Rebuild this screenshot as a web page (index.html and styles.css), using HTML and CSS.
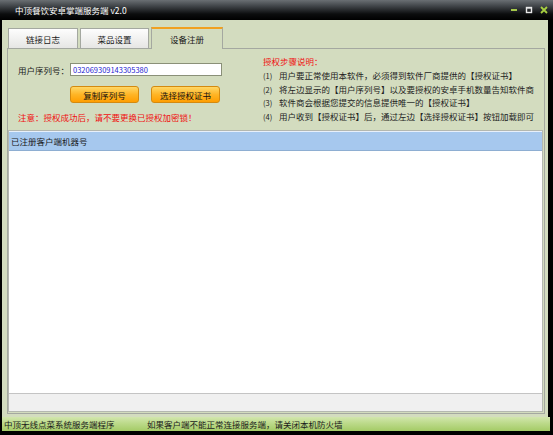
FILE: index.html
```html
<!DOCTYPE html>
<html>
<head>
<meta charset="utf-8">
<link rel="stylesheet" href="styles.css">
</head>
<body>
<div class="window">
  <div class="titlebar">
    <span class="title">中顶餐饮安卓掌端服务端 v2.0</span>
    <div class="controls">
      <svg class="ctl" width="8" height="8" viewBox="0 0 8 8"><rect x="1" y="3" width="6" height="2" fill="#a6c84a"/></svg>
      <svg class="ctl" width="8" height="8" viewBox="0 0 8 8"><rect x="1.5" y="1.5" width="5" height="5" fill="none" stroke="#e8e8e8" stroke-width="1.4"/><rect x="1" y="1" width="6" height="1.6" fill="#e8e8e8"/></svg>
      <svg class="ctl" width="8" height="8" viewBox="0 0 8 8"><path d="M1 1 L7 7 M7 1 L1 7" stroke="#a8d040" stroke-width="1.8"/></svg>
    </div>
  </div>
  <div class="client">
    <div class="tabs">
      <div class="tab">链接日志</div>
      <div class="tab">菜品设置</div>
      <div class="tab active">设备注册</div>
    </div>
    <div class="panel">
      <div class="top">
        <div class="left">
          <div class="row-serial">
            <span class="label">用户序列号：</span>
            <div class="input">032069309143305380</div>
          </div>
          <div class="row-buttons">
            <div class="btn">复制序列号</div>
            <div class="btn">选择授权证书</div>
          </div>
          <div class="note">注意：授权成功后，请不要更换已授权加密锁！</div>
        </div>
        <div class="right">
          <div class="help-title">授权步骤说明：</div>
          <div class="help-line"><span class="num">(1)</span>用户要正常使用本软件，必须得到软件厂商提供的【授权证书】</div>
          <div class="help-line"><span class="num">(2)</span>将左边显示的【用户序列号】以及要授权的安卓手机数量告知软件商</div>
          <div class="help-line"><span class="num">(3)</span>软件商会根据您提交的信息提供唯一的【授权证书】</div>
          <div class="help-line"><span class="num">(4)</span>用户收到【授权证书】后，通过左边【选择授权证书】按钮加载即可</div>
        </div>
      </div>
      <div class="listbox">
        <div class="list-header">已注册客户端机器号</div>
        <div class="list-body"></div>
        <div class="list-footer"></div>
      </div>
    </div>
    <div class="statusbar">
      <span class="status1">中顶无线点菜系统服务端程序</span>
      <span class="status2">如果客户端不能正常连接服务端，请关闭本机防火墙</span>
    </div>
  </div>
</div>
</body>
</html>
```

FILE: styles.css
```css
* { box-sizing: border-box; }
html, body { margin: 0; padding: 0; }
body {
  font-family: "Noto Sans CJK SC", "Liberation Sans", sans-serif;
  font-size: 8.5px;
  color: #1a1a1a;
  background: #000;
}
.window {
  width: 553px;
  height: 435px;
  background: #000;
  display: flex;
  flex-direction: column;
  padding: 0 0 4px 0;
}
.titlebar {
  height: 20px;
  flex: none;
  background: linear-gradient(#6a6f73 0%, #3a3e42 35%, #0c0d0e 70%, #000 100%);
  display: flex;
  align-items: center;
  padding-left: 15px;
  color: #fff;
}
.title { line-height: 12px; letter-spacing: 0; }
.controls {
  margin-left: auto;
  display: flex;
  gap: 7px;
  margin-right: 5px;
  align-items: center;
}
.ctl { display: block; }
.client {
  flex: 1;
  background: #d3dcbf;
  margin: 0 5px 0 2px;
  display: flex;
  flex-direction: column;
}
.tabs {
  height: 28px;
  flex: none;
  display: flex;
  align-items: flex-end;
  padding-left: 6px;
  gap: 2px;
}
.tab {
  width: 70px;
  height: 20px;
  border: 1px solid #a4a8a0;
  border-bottom: none;
  background: linear-gradient(#fdfdfd, #e6e6e4);
  display: flex;
  align-items: center;
  justify-content: center;
  line-height: 12px;
}
.tab:nth-child(2) { width: 69px; }
.tab.active {
  width: 72px;
  height: 22px;
  background: #d3dcbf;
  border-top: 2px solid #f0a020;
  margin-bottom: -1px;
  position: relative;
  z-index: 1;
}
.panel {
  flex: 1;
  margin: 0 3px 0 5px;
  border: 1px solid #a4a8a0;
  display: flex;
  flex-direction: column;
}
.top {
  height: 81px;
  flex: none;
  display: grid;
  grid-template-columns: 255px 1fr;
}
.left {
  display: flex;
  flex-direction: column;
  padding-left: 10px;
}
.row-serial {
  margin-top: 14px;
  height: 13px;
  display: flex;
  align-items: center;
}
.label { width: 52px; line-height: 12px; }
.input {
  width: 152px;
  height: 13px;
  background: #fff;
  border: 1px solid #8a9078;
  color: #2424d0;
  padding-left: 2px;
  line-height: 11px;
  font-size: 7.5px;
}
.row-buttons {
  margin-top: 10px;
  display: flex;
  gap: 12px;
  padding-left: 52px;
}
.btn {
  width: 69px;
  height: 17px;
  border: 1px solid #d48a10;
  border-radius: 3px;
  background: linear-gradient(#ffd766 0%, #ffb526 50%, #ff9e00 100%);
  display: flex;
  align-items: center;
  justify-content: center;
  line-height: 12px;
  color: #111;
}
.note {
  margin-top: 8px;
  line-height: 12px;
  color: #f01010;
}
.right {
  padding-top: 6px;
}
.help-title {
  line-height: 13.8px;
  color: #f01010;
}
.help-line {
  line-height: 13.8px;
  white-space: nowrap;
  color: #222;
}
.num {
  display: inline-block;
  width: 16px;
  font-size: 7.5px;
}
.listbox {
  flex: 1;
  margin-right: 1px;
  border: 1px solid #b4b8b0;
  display: flex;
  flex-direction: column;
  background: #fff;
  margin-bottom: 1px;
}
.list-header {
  height: 20px;
  flex: none;
  background: #a6c8ee;
  border-top: 1px solid #e8f0fa;
  border-bottom: 1px solid #8eaed2;
  display: flex;
  align-items: center;
  padding-left: 2px;
  line-height: 12px;
  color: #1a1a1a;
}
.list-body { flex: 1; background: #fff; }
.list-footer {
  height: 18px;
  flex: none;
  background: #f0f0f0;
  border-top: 1px solid #c4c4c4;
}
.statusbar {
  height: 14px;
  flex: none;
  margin-top: 3px;
  margin-right: -2px;
  background: linear-gradient(#d2e6ad 0%, #bcda8a 45%, #a4cb66 100%);
  display: flex;
  align-items: center;
  padding-left: 2px;
  line-height: 12px;
  color: #1c1c1c;
}
.status1 { width: 143px; }
```
